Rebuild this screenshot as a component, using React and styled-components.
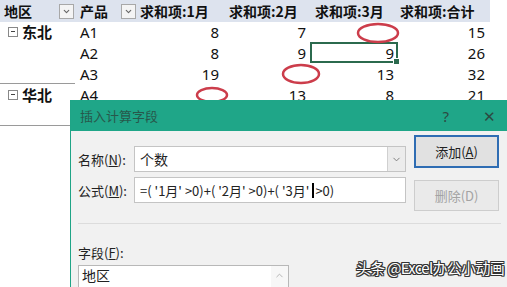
import React from 'react';
import styled, { createGlobalStyle } from 'styled-components';
import { ChevronDown, ChevronUp } from 'lucide-react';

const GlobalStyle = createGlobalStyle`
  body {
    margin: 0;
    background: #fff;
    font-family: "Noto Sans", "Noto Sans CJK SC", sans-serif;
  }
`;

const Page = styled.div`
  position: relative;
  width: 507px;
  height: 287px;
  overflow: hidden;
  background: #fff;
`;

const Sheet = styled.div`
  display: grid;
  grid-template-columns: 75px 65px 82px 88px 88px 92px;
  grid-auto-rows: 21px;
  color: #111;
`;

const HeadCell = styled.div`
  height: 22px;
  background: #dde3ee;
  display: flex;
  align-items: center;
  justify-content: space-between;
  padding-left: ${p => p.$pl || 0}px;
  padding-right: ${p => p.$pr || 0}px;
  font-family: "Noto Sans CJK SC", sans-serif;
  font-weight: 700;
  font-size: 14px;
  white-space: nowrap;
`;

const FilterBtn = styled.span`
  width: 13px;
  height: 13px;
  border: 1px solid #a8a8a8;
  background: #f4f4f4;
  display: flex;
  align-items: center;
  justify-content: center;
  color: #666;
`;

const Cell = styled.div`
  position: relative;
  display: flex;
  align-items: center;
  justify-content: ${p => (p.$num ? 'flex-end' : 'flex-start')};
  padding-left: ${p => p.$pl || 0}px;
  padding-right: ${p => p.$pr || 0}px;
  font-size: 15px;
  border-bottom: ${p => (p.$groupEnd ? '1px solid #9a9a9a' : 'none')};
  box-shadow: ${p => (p.$selected ? 'inset 0 0 0 2px #2b6a4e' : 'none')};

  ${p => p.$selected && `
    &::after {
      content: '';
      position: absolute;
      right: -2px;
      bottom: -2px;
      width: 5px;
      height: 5px;
      background: #2b6a4e;
      border: 1px solid #fff;
    }
  `}
`;

const Group = styled.span`
  display: flex;
  align-items: center;
  gap: 4px;
  font-family: "Noto Sans CJK SC", sans-serif;
  font-weight: 700;
  font-size: 15px;
`;

const Toggle = styled.span`
  width: 8px;
  height: 8px;
  border: 1px solid #888;
  position: relative;
  margin-left: 8px;
  &::after {
    content: '';
    position: absolute;
    left: 2px;
    right: 2px;
    top: 3.5px;
    height: 1px;
    background: #444;
  }
`;

const Marks = styled.svg`
  position: absolute;
  left: 0;
  top: 0;
  pointer-events: none;
`;

const Dialog = styled.div`
  position: absolute;
  left: 70px;
  top: 100px;
  width: 445px;
  height: 200px;
  border-left: 1px solid #1fa486;
  background: #f1f1f1;
  font-family: "Noto Sans CJK SC", sans-serif;
  font-size: 13px;
  color: #222;
`;

const TitleBar = styled.div`
  height: 31px;
  background: #1fa688;
  display: flex;
  align-items: center;
  padding-left: 9px;
  color: #27584b;
  font-size: 13px;
`;

const TitleTools = styled.div`
  margin-left: auto;
  display: flex;
  align-items: center;
  gap: 34px;
  padding-right: 20px;
  color: #2c4a42;
  font-family: "Noto Sans", sans-serif;
  font-size: 15px;
`;

const Body = styled.div`
  padding: 0 7px;
`;

const TopSection = styled.div`
  display: flex;
  height: 92px;
`;

const FieldsCol = styled.div`
  display: flex;
  flex-direction: column;
  gap: 5px;
  padding-top: 15px;
`;

const FieldRow = styled.div`
  display: flex;
  align-items: center;
`;

const Label = styled.span`
  width: 56px;
  white-space: nowrap;
  u { text-decoration: underline; }
`;

const Input = styled.div`
  width: 272px;
  height: 26px;
  box-sizing: border-box;
  border: 1px solid #c4c4c4;
  background: #fff;
  display: flex;
  align-items: center;
  padding-left: 5px;
  font-size: ${p => p.$size || 14}px;
  white-space: nowrap;
  overflow: hidden;
`;

const ComboArrow = styled.span`
  margin-left: auto;
  width: 17px;
  height: 100%;
  border-left: 1px solid #d0d0d0;
  background: #ececec;
  display: flex;
  align-items: center;
  justify-content: center;
  color: #777;
`;

const Caret = styled.span`
  display: inline-block;
  width: 2px;
  height: 15px;
  background: #000;
  margin: 0 1px 0 3px;
`;

const ButtonsCol = styled.div`
  display: flex;
  flex-direction: column;
  gap: 12px;
  margin-left: 8px;
  padding-top: 4px;
`;

const Button = styled.div`
  width: 85px;
  height: ${p => (p.$primary ? 33 : 31)}px;
  box-sizing: border-box;
  display: flex;
  align-items: center;
  justify-content: center;
  background: ${p => (p.$primary ? '#e1e1e1' : '#eaeaea')};
  border: ${p => (p.$primary ? '2px solid #2f6db3' : '1px solid #cdcdcd')};
  color: ${p => (p.$primary ? '#222' : '#a3a3a3')};
  font-size: 13px;
  u { text-decoration: underline; }
`;

const Separator = styled.div`
  height: 1px;
  width: 423px;
  background: #dcdcdc;
`;

const SectionLabel = styled.div`
  margin-top: 20px;
  height: 18px;
  line-height: 18px;
  u { text-decoration: underline; }
`;

const ListBox = styled.div`
  margin-top: 3px;
  width: 211px;
  height: 40px;
  box-sizing: border-box;
  border: 1px solid #b8b8b8;
  background: #fff;
  display: flex;
`;

const ListItems = styled.div`
  flex: 1;
  padding: 0 3px;
  font-size: 14px;
  line-height: 18px;
`;

const ScrollBar = styled.div`
  width: 17px;
  background: #f7f7f7;
  display: flex;
  justify-content: center;
  padding-top: 4px;
  color: #b0b0b0;
`;

const Watermark = styled.div`
  position: absolute;
  right: 3px;
  top: 257px;
  font-family: "Noto Sans CJK SC", sans-serif;
  font-size: 15px;
  letter-spacing: -0.7px;
  color: #fff;
  text-shadow:
    1px 1px 0 #333, -1px -1px 0 #333, 1px -1px 0 #333, -1px 1px 0 #333,
    0 1px 0 #333, 0 -1px 0 #333, 1px 0 0 #333, -1px 0 0 #333;
`;

const rows = [
  { group: '东北', product: 'A1', m1: 8, m2: 7, m3: '', total: 15 },
  { product: 'A2', m1: 8, m2: 9, m3: 9, total: 26, selected: true },
  { product: 'A3', m1: 19, m2: '', m3: 13, total: 32, groupEnd: true },
  { group: '华北', product: 'A4', m1: '', m2: 13, m3: 8, total: 21 },
  { product: 'A5', m1: '', m2: '', m3: '', total: '', groupEnd: true },
];

function App() {
  return (
    <>
      <GlobalStyle />
      <Page>
        <Sheet>
          <HeadCell $pl={4} $pr={1}>
            地区
            <FilterBtn><ChevronDown size={9} strokeWidth={3} /></FilterBtn>
          </HeadCell>
          <HeadCell $pl={5} $pr={4}>
            产品
            <FilterBtn><ChevronDown size={9} strokeWidth={3} /></FilterBtn>
          </HeadCell>
          <HeadCell>求和项:1月</HeadCell>
          <HeadCell $pl={7}>求和项:2月</HeadCell>
          <HeadCell $pl={5}>求和项:3月</HeadCell>
          <HeadCell $pl={2}>求和项:合计</HeadCell>

          {rows.map((r, i) => (
            <React.Fragment key={i}>
              <Cell $groupEnd={r.groupEnd}>
                {r.group && (
                  <Group>
                    <Toggle />
                    {r.group}
                  </Group>
                )}
              </Cell>
              <Cell $pl={5}>{r.product}</Cell>
              <Cell $num $pr={3}>{r.m1}</Cell>
              <Cell $num $pr={4}>{r.m2}</Cell>
              <Cell $num $pr={4} $selected={r.selected}>{r.m3}</Cell>
              <Cell $num $pr={5}>{r.total}</Cell>
            </React.Fragment>
          ))}
        </Sheet>

        <Marks width="507" height="287">
          <ellipse cx="378" cy="33" rx="20" ry="9" fill="none" stroke="#cc3d4b" strokeWidth="2.5" />
          <ellipse cx="301" cy="74" rx="18" ry="9" fill="none" stroke="#cc3d4b" strokeWidth="2.5" />
          <ellipse cx="212" cy="95" rx="15" ry="7" fill="none" stroke="#cc3d4b" strokeWidth="2.5" />
        </Marks>

        <Dialog>
          <TitleBar>
            插入计算字段
            <TitleTools>
              <span>?</span>
              <span>✕</span>
            </TitleTools>
          </TitleBar>
          <Body>
            <TopSection>
              <FieldsCol>
                <FieldRow>
                  <Label>名称(<u>N</u>):</Label>
                  <Input>
                    个数
                    <ComboArrow><ChevronDown size={11} /></ComboArrow>
                  </Input>
                </FieldRow>
                <FieldRow>
                  <Label>公式(<u>M</u>):</Label>
                  <Input $size={13}>
                    =( '1月' &gt;0)+( '2月' &gt;0)+( '3月'<Caret />&gt;0)
                  </Input>
                </FieldRow>
              </FieldsCol>
              <ButtonsCol>
                <Button $primary>添加(<u>A</u>)</Button>
                <Button>删除(D)</Button>
              </ButtonsCol>
            </TopSection>
            <Separator />
            <SectionLabel>字段(<u>F</u>):</SectionLabel>
            <ListBox>
              <ListItems>
                <div>地区</div>
                <div>产品</div>
              </ListItems>
              <ScrollBar><ChevronUp size={11} /></ScrollBar>
            </ListBox>
          </Body>
        </Dialog>

        <Watermark>头条 @Excel办公小动画</Watermark>
      </Page>
    </>
  );
}

export default App;
